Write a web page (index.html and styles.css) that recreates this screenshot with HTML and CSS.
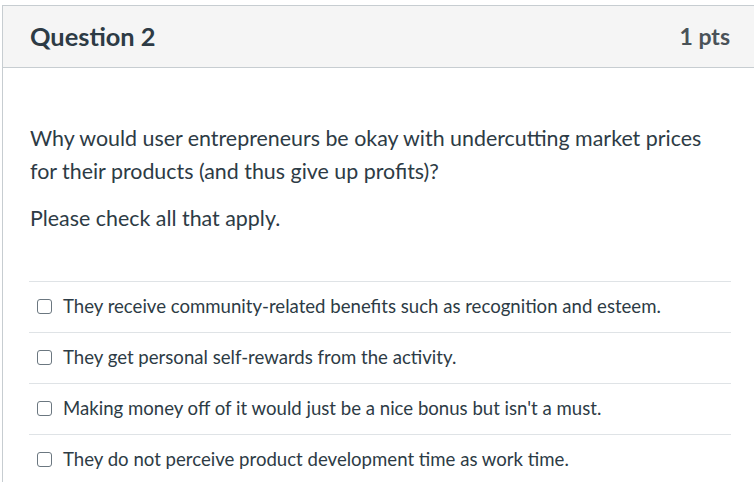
FILE: index.html
```html
<!DOCTYPE html>
<html>
<head>
<meta charset="utf-8">
<link rel="stylesheet" href="styles.css">
</head>
<body>
<div class="card">
  <div class="header">
    <h2 class="title">Question 2</h2>
    <div class="pts">1 pts</div>
  </div>
  <div class="body">
    <div class="text">
      <p>Why would user entrepreneurs be okay with undercutting market prices for their products (and thus give up profits)?</p>
      <p>Please check all that apply.</p>
    </div>
    <div class="answers">
      <label class="answer"><span class="box"></span><span>They receive community-related benefits such as recognition and esteem.</span></label>
      <label class="answer"><span class="box"></span><span>They get personal self-rewards from the activity.</span></label>
      <label class="answer"><span class="box"></span><span>Making money off of it would just be a nice bonus but isn't a must.</span></label>
      <label class="answer"><span class="box"></span><span>They do not perceive product development time as work time.</span></label>
    </div>
  </div>
</div>
</body>
</html>
```
FILE: styles.css
```css
html, body {
  margin: 0;
  padding: 0;
  background: #fff;
  overflow: hidden;
}
body {
  font-family: Lato, "Noto Sans", sans-serif;
  color: #2d3b45;
}
.card {
  margin: 5px 0 0 2px;
  width: 756px;
  border: 1px solid #c7cdd1;
  border-right: 0;
}
.header {
  height: 61px;
  background: #f5f5f5;
  border-bottom: 1px solid #c7cdd1;
  display: flex;
  align-items: center;
  justify-content: space-between;
  padding: 0 29px 2px 27px;
  box-sizing: border-box;
  height: 62px;
}
.title {
  margin: 0;
  font-size: 25.4px;
  font-weight: 700;
  color: #2d3b45;
}
.pts {
  font-size: 23px;
  font-weight: 700;
  color: #4a5258;
}
.text {
  padding: 54px 40px 0 27px;
  font-size: 21.4px;
  line-height: 33px;
}
.text p {
  margin: 0 0 14px;
}
.answers {
  margin: 46px 28px 0 26px;
  display: flex;
  flex-direction: column;
}
.answer {
  display: flex;
  align-items: center;
  gap: 11px;
  height: 50px;
  box-sizing: border-box;
  height: 51px;
  padding-bottom: 3px;
  border-top: 1px solid #dfe3e6;
  padding-left: 8px;
  font-size: 18.6px;
}
.box {
  width: 13px;
  height: 13px;
  border: 1px solid #6b7780;
  border-radius: 3px;
  flex: none;
  margin-top: 2px;
}
```
